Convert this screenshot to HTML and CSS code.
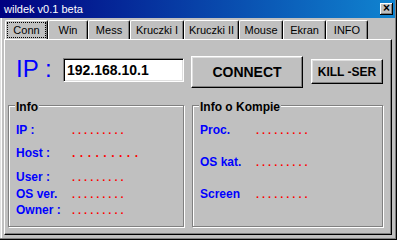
FILE: index.html
```html
<!DOCTYPE html>
<html lang="pl">
<head>
    <meta charset="UTF-8">
    <title>wildek v0.1 beta</title>
    <link rel="stylesheet" href="styles.css">
</head>
<body>

<div class="okno">
    <div class="pasek">
        <span class="tytul">wildek v0.1 beta</span>
        <span class="zamknij">&#215;</span>
    </div>

    <div class="zakladki">
        <div class="zakladka aktywna"><span>Conn</span></div>
        <div class="zakladka"><span>Win</span></div>
        <div class="zakladka"><span>Mess</span></div>
        <div class="zakladka"><span>Kruczki I</span></div>
        <div class="zakladka"><span>Kruczki II</span></div>
        <div class="zakladka"><span>Mouse</span></div>
        <div class="zakladka"><span>Ekran</span></div>
        <div class="zakladka"><span>INFO</span></div>
    </div>

    <div class="panel">
        <div class="polacz">
            <span class="ip-napis">IP :</span>
            <input class="ip-pole" type="text" value="192.168.10.1">
            <button class="btn-connect">CONNECT</button>
            <button class="btn-kill">KILL -SER</button>
        </div>

        <div class="grupy">
            <fieldset class="grupa grupa-info">
                <legend>Info</legend>
                <div class="wiersz odstep1"><span class="klucz">IP :</span><span class="kropki">.........</span></div>
                <div class="wiersz odstep2"><span class="klucz">Host :</span><span class="kropki grube">.........</span></div>
                <div class="wiersz odstep3"><span class="klucz">User :</span><span class="kropki">.........</span></div>
                <div class="wiersz"><span class="klucz">OS ver.</span><span class="kropki">.........</span></div>
                <div class="wiersz"><span class="klucz">Owner :</span><span class="kropki">.........</span></div>
            </fieldset>

            <fieldset class="grupa grupa-kompie">
                <legend>Info o Kompie</legend>
                <div class="wiersz szeroki"><span class="klucz">Proc.</span><span class="kropki">.........</span></div>
                <div class="wiersz szeroki"><span class="klucz">OS kat.</span><span class="kropki">.........</span></div>
                <div class="wiersz"><span class="klucz">Screen</span><span class="kropki">.........</span></div>
            </fieldset>
        </div>
    </div>
</div>

</body>
</html>
```

FILE: styles.css
```css
* {
    box-sizing: border-box;
}
body {
    margin: 0;
    font-family: "Liberation Sans", Arial, sans-serif;
    background-color: #c0c0c0;
}
.okno {
    width: 397px;
    height: 240px;
    padding-right: 2px;
    background-color: #c0c0c0;
    box-shadow: inset -1px -1px #000, inset -2px -2px #808080, inset 1px 0 #dfdfdf, inset 2px 0 #fff;
}
.pasek {
    height: 18px;
    display: flex;
    align-items: center;
    justify-content: space-between;
    padding: 0 2px 0 4px;
    background: linear-gradient(to right, #000080, #1084d0);
    color: white;
    font-size: 11px;
}
.zamknij {
    width: 13px;
    height: 12px;
    background-color: #c0c0c0;
    color: black;
    font-weight: bold;
    font-size: 12px;
    line-height: 10px;
    text-align: center;
    box-shadow: inset -1px -1px #000, inset 1px 1px #fff, inset -2px -2px #808080;
}
.zakladki {
    display: grid;
    grid-template-columns: 43px 40px 42px 54px 55px 44px 43px 42px;
    height: 19px;
    margin: 2px 0 0 5px;
}
.zakladka {
    display: flex;
    align-items: center;
    justify-content: center;
    font-size: 11px;
    border-top: 1px solid #fff;
    border-left: 1px solid #fff;
    border-right: 1px solid #000;
    border-radius: 2px 2px 0 0;
    box-shadow: inset -1px 0 #808080;
}
.aktywna span {
    flex: 1;
    align-self: stretch;
    margin: 1px;
    border: 1px dotted #000;
    display: flex;
    align-items: center;
    justify-content: center;
}
.panel {
    width: 388px;
    height: 196px;
    margin-left: 4px;
    padding: 16px 0 0 3px;
    border-top: 1px solid #fff;
    border-left: 1px solid #fff;
    border-right: 1px solid #000;
    border-bottom: 1px solid #000;
    box-shadow: inset -1px -1px #808080;
}
.polacz {
    display: flex;
    align-items: center;
    height: 32px;
    padding-left: 8px;
}
.ip-napis {
    width: 47px;
    padding-bottom: 6px;
    font-size: 24px;
    color: #0000ff;
}
.ip-pole {
    align-self: flex-start;
    margin-top: 2px;
    width: 121px;
    height: 24px;
    padding: 0 3px;
    font-family: inherit;
    font-size: 14px;
    font-weight: bold;
    color: black;
    background-color: white;
    border-top: 1px solid #808080;
    border-left: 1px solid #808080;
    border-right: 1px solid #fff;
    border-bottom: 1px solid #fff;
    box-shadow: inset 1px 1px #000, inset -1px -1px #dfdfdf;
    outline: none;
}
button {
    font-family: inherit;
    color: black;
    background-color: #c0c0c0;
    padding: 0;
    border-top: 1px solid #fff;
    border-left: 1px solid #fff;
    border-right: 1px solid #000;
    border-bottom: 1px solid #000;
    box-shadow: inset -1px -1px #808080, inset 1px 1px #dfdfdf;
}
.btn-connect {
    width: 112px;
    height: 32px;
    margin-left: 7px;
    font-size: 14px;
    font-weight: bold;
}
.btn-kill {
    align-self: flex-start;
    width: 72px;
    height: 25px;
    margin: 3px 0 0 8px;
    font-size: 12px;
    font-weight: bold;
}
.grupy {
    display: flex;
    gap: 8px;
    margin-top: 9px;
}
.grupa {
    margin: 0;
    height: 130px;
    padding: 9px 0 0 7px;
    border: 1px solid #808080;
    box-shadow: inset 1px 1px #fff, 1px 1px #fff;
}
.grupa-info {
    width: 176px;
}
.grupa-kompie {
    width: 191px;
}
.grupa legend {
    margin-left: -1px;
    padding: 4px 1px 0;
    font-size: 12px;
    line-height: 12px;
    font-weight: bold;
    background-color: #c0c0c0;
}
.wiersz {
    display: flex;
    height: 16px;
    line-height: 16px;
}
.odstep1 {
    margin-bottom: 7px;
}
.odstep2 {
    margin-bottom: 8px;
}
.odstep3 {
    margin-bottom: 1px;
}
.szeroki {
    margin-bottom: 16px;
}
.klucz {
    width: 56px;
    font-size: 12px;
    font-weight: bold;
    color: #0000ff;
}
.kropki {
    font-size: 11px;
    font-weight: bold;
    letter-spacing: 3px;
    color: #ff0000;
}
.kropki.grube {
    font-size: 12px;
    letter-spacing: 4.5px;
}
```
